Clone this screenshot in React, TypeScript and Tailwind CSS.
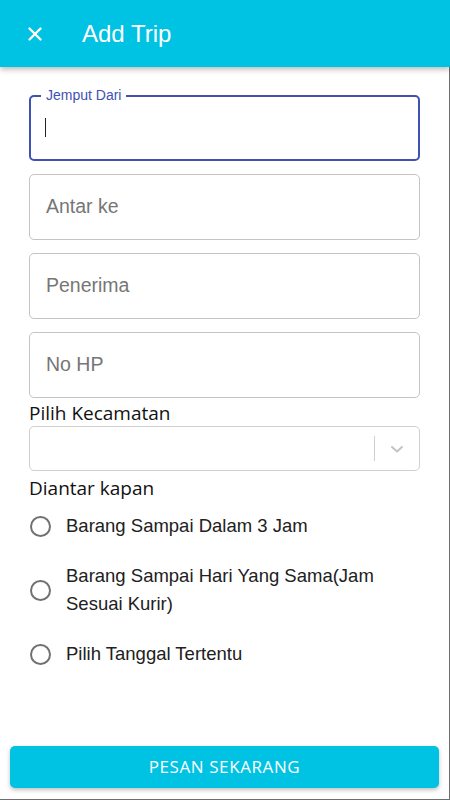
import { X } from "lucide-react";

// Add Trip form: outlined inputs, a select, delivery-time radios and a fixed
// bottom action button.

const fields = ["Antar ke", "Penerima", "No HP"];

const options = [
  "Barang Sampai Dalam 3 Jam",
  "Barang Sampai Hari Yang Sama(Jam Sesuai Kurir)",
  "Pilih Tanggal Tertentu",
];

function Radio({ label }: { label: string }) {
  return (
    <label className="flex items-center gap-[15px] pl-[30px] pr-6">
      <span className="h-[21px] w-[21px] shrink-0 rounded-full border-2 border-[#717171]" />
      <span className="text-[18.5px] leading-[28px] text-[#212121]">{label}</span>
    </label>
  );
}

export default function App() {
  return (
    <div className="flex h-[800px] w-[450px] flex-col bg-white font-['Liberation_Sans',Arial,sans-serif]">
      <header className="relative z-10 flex h-[67px] shrink-0 items-center bg-[#00c2e3] px-6 shadow-[0_2px_6px_rgba(0,0,0,0.3)]">
        <X className="h-[22px] w-[22px] text-white" strokeWidth={2.6} />
        <h1 className="ml-[36px] text-[24px] text-white">Add Trip</h1>
      </header>

      <main className="flex flex-1 flex-col border-r border-b border-[#6f6f6f]">
        <div className="flex flex-col px-[29px] pt-[28px]">
          <div className="relative h-[66px] rounded-[5px] border-2 border-[#3f51b5]">
            <span className="absolute -top-[11px] left-[10px] bg-white px-[5px] text-[14px] leading-[18px] text-[#3f51b5]">
              Jemput Dari
            </span>
            <span className="absolute left-[14px] top-[21px] h-[19px] w-px bg-[#222]" />
          </div>
          {fields.map((f) => (
            <div
              key={f}
              className="mt-[13px] flex h-[66px] items-center rounded-[5px] border border-[#c4c4c4] px-[16px] text-[19.5px] text-[#767676]"
            >
              {f}
            </div>
          ))}

          <p className="mt-[2px] font-['Open_Sans',sans-serif] text-[19px] font-medium leading-[26px] text-[#111]">
            Pilih Kecamatan
          </p>
          <div className="flex h-[45px] items-center justify-end rounded-[5px] border border-[#d0d0d0]">
            <span className="h-[25px] w-px bg-[#d0d0d0]" />
            <svg
              className="mx-[12px] h-[20px] w-[20px] text-[#c4c4c4]"
              viewBox="0 0 20 20"
              fill="none"
              stroke="currentColor"
              strokeWidth={2}
              strokeLinecap="round"
              strokeLinejoin="round"
            >
              <path d="M5 8l5 4.5L15 8" />
            </svg>
          </div>
          <p className="mt-[4px] font-['Open_Sans',sans-serif] text-[19px] font-medium leading-[26px] text-[#111]">
            Diantar kapan
          </p>
        </div>

        <div className="mt-[11px] flex flex-col gap-[22px]">
          <Radio label={options[0]} />
          <Radio label={options[1]} />
          <Radio label={options[2]} />
        </div>

        <div className="mt-auto px-[10px] pb-[11px]">
          <button
            type="button"
            className="h-[42px] w-full rounded-[5px] bg-[#00c2e3] font-['Open_Sans',sans-serif] text-[17px] font-medium tracking-[0.6px] text-white shadow-[0_2px_4px_rgba(0,0,0,0.25)]"
          >
            PESAN SEKARANG
          </button>
        </div>
      </main>
    </div>
  );
}
